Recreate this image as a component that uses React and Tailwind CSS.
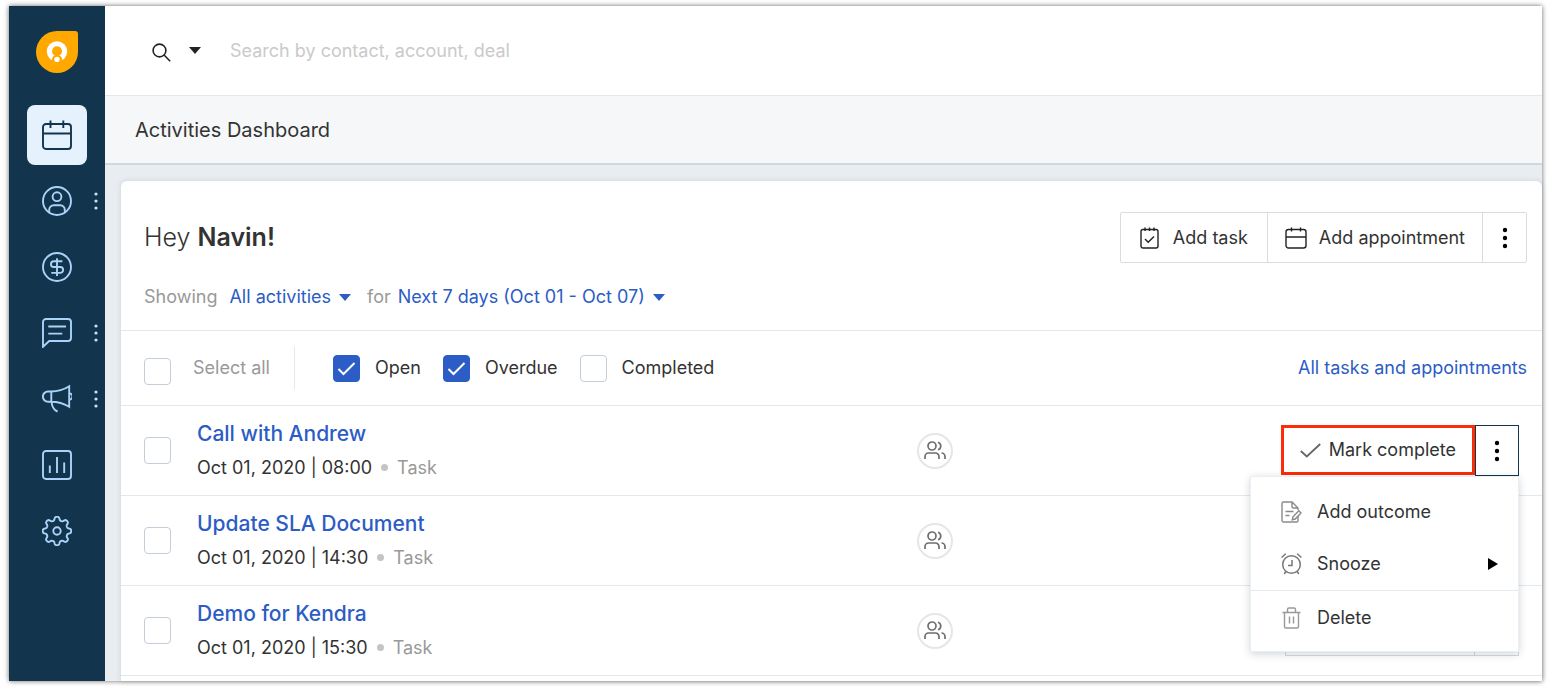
import React, { useState } from 'react';
import clsx from 'clsx';

const gearPath = (() => {
  const points = [];
  for (let i = 0; i < 160; i++) {
    const angle = (i / 160) * Math.PI * 2;
    const r = 12.5 + 1.8 * Math.tanh(1.8 * Math.cos(angle * 8));
    points.push(`${(15 + r * Math.cos(angle)).toFixed(2)} ${(15 + r * Math.sin(angle)).toFixed(2)}`);
  }
  return `M${points.join('L')}Z`;
})();

const navItems = [
  {
    id: 'activities',
    label: 'Activities',
    icon: (
      <>
        <rect x="1" y="4" width="28" height="25" rx="3" />
        <path d="M1 13.5h28M8.5 .5v7.5M21.3 .5v7.5" />
      </>
    ),
  },
  {
    id: 'contacts',
    label: 'Contacts',
    more: true,
    icon: (
      <>
        <circle cx="15" cy="15" r="14" />
        <circle cx="15" cy="10.7" r="4.4" />
        <path d="M7.2 26.5v-2.8a4.4 4.4 0 0 1 4.4-4.4h6.8a4.4 4.4 0 0 1 4.4 4.4v2.8" />
      </>
    ),
  },
  {
    id: 'deals',
    label: 'Deals',
    icon: (
      <>
        <circle cx="15" cy="15" r="14" />
        <path d="M20.4 9.3h-8.6a2.85 2.85 0 0 0 0 5.7h6.4a2.95 2.95 0 0 1 0 5.9H9.3M15 6.3v17.6" />
      </>
    ),
  },
  {
    id: 'conversations',
    label: 'Conversations',
    more: true,
    icon: <path d="M1 28.8V4a3 3 0 0 1 3-3h22a3 3 0 0 1 3 3v16a3 3 0 0 1-3 3H7.2zM6.3 8.5H24M6.3 15.6h14" />,
  },
  {
    id: 'campaigns',
    label: 'Campaigns',
    more: true,
    icon: (
      <>
        <path d="M9.3 7.5H6A5.1 5.1 0 0 0 6 17.7h3.3zM9.3 7.5C16 7.5 22 5.5 27.2 2.2v20.6C22 19.6 16 17.7 9.3 17.7" />
        <path d="M27.5 9.5a3 3 0 0 1 0 6M9.6 17.7c.2 5 1.8 8 6 10" />
      </>
    ),
  },
  {
    id: 'reports',
    label: 'Reports',
    icon: (
      <>
        <rect x="1" y="1" width="28" height="28" rx="3" />
        <path d="M7.8 15.5v7.5M15 7v16M22.2 12.5v10.5" />
      </>
    ),
  },
  {
    id: 'settings',
    label: 'Settings',
    icon: (
      <>
        <path d={gearPath} />
        <circle cx="15" cy="15" r="3.7" />
      </>
    ),
  },
];

const activities = [
  { id: 1, title: 'Call with Andrew', date: 'Oct 01, 2020 | 08:00', type: 'Task' },
  { id: 2, title: 'Update SLA Document', date: 'Oct 01, 2020 | 14:30', type: 'Task' },
  { id: 3, title: 'Demo for Kendra', date: 'Oct 01, 2020 | 15:30', type: 'Task' },
];

function Dots() {
  return (
    <svg width="6" height="22" viewBox="0 0 6 22" fill="currentColor">
      <circle cx="3" cy="3" r="2.2" />
      <circle cx="3" cy="11" r="2.2" />
      <circle cx="3" cy="19" r="2.2" />
    </svg>
  );
}

function Caret() {
  return (
    <svg width="12" height="7" viewBox="0 0 12 7" fill="currentColor">
      <path d="M0 0h12L6 7z" />
    </svg>
  );
}

function Checkbox({ label, ...props }) {
  return (
    <span className="relative block size-[27px] shrink-0">
      <input
        type="checkbox"
        aria-label={label}
        className="peer block size-full appearance-none rounded-[4px] border border-[#c3ced9] bg-white checked:border-[#2c5cc5] checked:bg-[#2c5cc5]"
        {...props}
      />
      <svg
        className="pointer-events-none absolute inset-0 hidden text-white peer-checked:block"
        viewBox="0 0 27 27"
        fill="none"
        stroke="currentColor"
        strokeWidth="2"
      >
        <path d="M5.5 14l5 5L21.5 8" />
      </svg>
    </span>
  );
}

function Logo() {
  return (
    <svg width="42" height="42" viewBox="0 0 42 42">
      <path d="M21 0h18a3 3 0 0 1 3 3v18A21 21 0 1 1 21 0z" fill="#ffa800" />
      <circle cx="21" cy="20.5" r="10.2" fill="#fff" />
      <circle cx="21" cy="20.3" r="5" fill="#ffa800" />
      <circle cx="21" cy="29" r="5.2" fill="#ffa800" />
      <circle cx="21" cy="28.4" r="2.7" fill="#fff" />
    </svg>
  );
}

function Sidebar() {
  const [active, setActive] = useState('activities');

  return (
    <aside className="w-24 shrink-0 bg-[#12344d]">
      <div className="flex justify-center pt-[25px] pb-8">
        <Logo />
      </div>
      <nav className="flex flex-col gap-[6px]">
        {navItems.map((item) => (
          <div key={item.id} className="grid grid-cols-[18px_60px_18px]">
            <button
              type="button"
              aria-label={item.label}
              onClick={() => setActive(item.id)}
              className={clsx(
                'col-start-2 flex size-[60px] items-center justify-center rounded-lg',
                active === item.id ? 'bg-[#e5f2fd] text-[#12344d]' : 'text-[#a9d3f8]'
              )}
            >
              <svg width="30" height="30" viewBox="0 0 30 30" fill="none" stroke="currentColor" strokeWidth="1.9">
                {item.icon}
              </svg>
            </button>
            {item.more && (
              <button type="button" aria-label={`${item.label} menu`} className="flex items-center justify-center text-[#c8e4fb]">
                <svg width="4" height="18" viewBox="0 0 4 18" fill="currentColor">
                  <circle cx="2" cy="2" r="1.6" />
                  <circle cx="2" cy="9" r="1.6" />
                  <circle cx="2" cy="16" r="1.6" />
                </svg>
              </button>
            )}
          </div>
        ))}
      </nav>
    </aside>
  );
}

function SearchBar() {
  return (
    <header className="flex h-[90px] items-center border-b border-[#e3e8ee] bg-white px-[47px]">
      <button type="button" aria-label="Search" className="flex items-center gap-[18px] text-[#222]">
        <svg width="19" height="22" viewBox="0 0 19 22" fill="none" stroke="currentColor" strokeWidth="1.6">
          <circle cx="7.5" cy="10.5" r="6.4" />
          <path d="M12 15l6.2 6.2" />
        </svg>
        <Caret />
      </button>
      <input
        type="search"
        aria-label="Search by contact, account, deal"
        placeholder="Search by contact, account, deal"
        className="ml-[29px] min-w-0 flex-1 text-lg outline-none placeholder:text-[#cacaca]"
      />
    </header>
  );
}

function RowMenu() {
  return (
    <div
      role="menu"
      className="absolute top-full right-0 z-10 w-[269px] border border-[#ebeff3] bg-white pt-2 pb-[7px] text-lg shadow-[0_2px_8px_rgba(18,52,77,0.2)]"
    >
      <button type="button" role="menuitem" className="flex h-[53px] w-full items-center gap-[15px] px-[30px]">
        <svg width="21" height="22" viewBox="0 0 21 22" fill="none" stroke="#8a8a8a" strokeWidth="1.4">
          <path d="M17 15v4.5a1.500 1.500 0 0 1-1.500 1.500H2.500A1.500 1.500 0 0 1 1 19.500v-17A1.500 1.500 0 0 1 2.500 1H11l6 6v2M11 1v4.500A1.500 1.500 0 0 0 12.500 7H17" />
          <path d="M4.500 10.500h8M4.500 14.500h4M17.800 9.800l2.200 2.200-5.800 6-3 .8.8-3z" />
        </svg>
        Add outcome
      </button>
      <button type="button" role="menuitem" className="flex h-[52px] w-full items-center gap-[15px] pr-5 pl-[30px]">
        <svg width="21" height="22" viewBox="0 0 21 22" fill="none" stroke="#777" strokeWidth="1.5">
          <circle cx="10.5" cy="11.5" r="8.8" />
          <path d="M11 7v5.500H7M.6 4.500L4.800 .8M16.200 .8l4.200 3.700M4.800 18.500l-1.500 2.500M16.200 18.500l1.500 2.500" />
        </svg>
        <span className="flex-1 text-left">Snooze</span>
        <svg width="10" height="12" viewBox="0 0 10 12" fill="#000">
          <path d="M0 0l10 6-10 6z" />
        </svg>
      </button>
      <button
        type="button"
        role="menuitem"
        className="flex h-[54px] w-full items-center gap-[15px] border-t border-[#e3e9ef] px-[30px]"
      >
        <svg width="21" height="22" viewBox="0 0 21 22" fill="none" stroke="#999" strokeWidth="1.4">
          <path d="M1.500 5.500h18M3.500 5.500v14A1.500 1.500 0 0 0 5 21h11a1.500 1.500 0 0 0 1.500-1.500v-14M6.500 5.500v-3A1.500 1.500 0 0 1 8 1h5a1.500 1.500 0 0 1 1.500 1.500v3M8.500 9.500v7M12.500 9.500v7" />
        </svg>
        Delete
      </button>
    </div>
  );
}

function ActivityRow({ activity, open, dimmed, onToggle }) {
  return (
    <li className="grid h-[90px] grid-cols-[9fr_7fr] items-center border-b border-[#e3e8ee] px-[23px]">
      <div className="flex items-center gap-[26px]">
        <Checkbox label={`Select ${activity.title}`} />
        <div>
          <a href="#" className="block text-[21px] leading-[34px] font-medium text-[#2c5cc5]">
            {activity.title}
          </a>
          <p className="flex items-center gap-[9px] text-lg leading-[34px]">
            {activity.date}
            <span className="size-[7px] rounded-full bg-[#c4c4c4]" />
            <span className="text-[#999]">{activity.type}</span>
          </p>
        </div>
      </div>
      <div className="flex items-center justify-between">
        <span className="flex size-9 items-center justify-center rounded-full border-2 border-[#e6e6e6]">
          <svg width="22" height="19" viewBox="0 0 22 19" fill="none" stroke="#6f6f6f" strokeWidth="1.7">
            <circle cx="8" cy="5" r="4" />
            <path d="M1 18v-2.500A3.500 3.500 0 0 1 4.500 12h7a3.500 3.500 0 0 1 3.500 3.500V18M14 1.200a4 4 0 0 1 0 7.600M17.500 12a3.500 3.500 0 0 1 3.500 3.500V18" />
          </svg>
        </span>
        <div className="relative flex h-[51px] items-start">
          <button
            type="button"
            className={clsx(
              'flex items-center gap-2 px-4 text-lg whitespace-nowrap',
              open ? 'h-[50px] border-3 border-[#fb2c08]' : 'h-full border border-[#d5d9dd]'
            )}
          >
            {/* other rows keep their label hidden while a menu is open */}
            <span className={clsx('flex items-center gap-2', dimmed && 'invisible')}>
              <svg width="21" height="15" viewBox="0 0 21 15" fill="none" stroke="#666" strokeWidth="1.8">
                <path d="M.8 8l6 5.500L20.200 1" />
              </svg>
              Mark complete
            </span>
          </button>
          <button
            type="button"
            aria-label="More actions"
            aria-expanded={open}
            onClick={onToggle}
            className={clsx(
              'flex h-full w-11 items-center justify-center border text-black',
              open ? 'border-[#12344d]' : 'border-l-0 border-[#d5d9dd]'
            )}
          >
            <Dots />
          </button>
          {open && <RowMenu />}
        </div>
      </div>
    </li>
  );
}

function App() {
  const [openRow, setOpenRow] = useState(1);

  return (
    <div className="flex min-h-screen overflow-hidden bg-white pt-[6px] pr-[7px] pb-[6px] pl-[9px] font-['Inter',sans-serif] text-[#333]">
      <div className="flex flex-1 bg-[#e9edf2] shadow-[0_0_5px_rgba(0,0,0,0.6)]">
        <Sidebar />
        <div className="flex min-w-0 flex-1 flex-col">
          <SearchBar />
          <div className="flex h-[69px] items-center border-b-2 border-[#cfd7df] bg-[#f5f7f9] px-[30px] pt-px">
            <h1 className="text-xl">Activities Dashboard</h1>
          </div>
          <main className="flex flex-1 flex-col pt-4 pl-4">
            <section className="flex-1 rounded-t-md bg-white shadow-[0_0_5px_rgba(18,52,77,0.15)]">
              <div className="border-b border-[#e3e8ee] pt-[31px] pr-[15px] pb-[19px] pl-[23px]">
                <div className="flex items-center justify-between">
                  <h2 className="text-[25px] font-light">
                    Hey <span className="font-semibold">Navin!</span>
                  </h2>
                  <div className="flex h-[51px] divide-x divide-[#dcdcdc] rounded-xs border border-[#dcdcdc] text-lg">
                    <button type="button" className="flex items-center gap-[14px] px-[19px]">
                      <svg width="19" height="22" viewBox="0 0 19 22" fill="none" stroke="#222" strokeWidth="1.4">
                        <rect x="1" y="2.5" width="17" height="18.5" rx="2" />
                        <path d="M5 .5v3.500M9.500 .5v3.500M14 .5v3.500M5 12l3.200 3.200L14 9.500" />
                      </svg>
                      Add task
                    </button>
                    <button type="button" className="flex items-center gap-3 px-[17px]">
                      <svg width="22" height="22" viewBox="0 0 22 22" fill="none" stroke="#222" strokeWidth="1.4">
                        <rect x="1" y="2.5" width="20" height="18.5" rx="2.5" />
                        <path d="M1 10h20M6.500 .5v4M15.500 .5v4" />
                      </svg>
                      Add appointment
                    </button>
                    <button type="button" aria-label="More" className="flex w-[43px] items-center justify-center text-black">
                      <Dots />
                    </button>
                  </div>
                </div>
                <div className="mt-5 flex items-center text-lg leading-7 text-[#999]">
                  <label htmlFor="activity-type">Showing</label>
                  <span className="ml-3 flex items-center gap-2 text-[#2c5cc5]">
                    <select id="activity-type" className="appearance-none field-sizing-content">
                      <option>All activities</option>
                    </select>
                    <Caret />
                  </span>
                  <label htmlFor="period" className="ml-4">for</label>
                  <span className="ml-[7px] flex items-center gap-2 text-[#2c5cc5]">
                    <select id="period" className="appearance-none field-sizing-content">
                      <option>Next 7 days (Oct 01 - Oct 07)</option>
                    </select>
                    <Caret />
                  </span>
                </div>
              </div>
              <div className="flex h-[75px] items-center border-b border-[#e3e8ee] pr-[15px] pl-[23px] text-lg">
                <label className="flex items-center gap-[22px] text-[#999]">
                  <span className="pt-[6px]">
                    <Checkbox />
                  </span>
                  Select all
                </label>
                <span className="ml-6 h-11 w-px bg-[#e3e8ed]" />
                <label className="ml-[38px] flex items-center gap-[15px]">
                  <Checkbox defaultChecked />
                  Open
                </label>
                <label className="ml-[22px] flex items-center gap-[15px]">
                  <Checkbox defaultChecked />
                  Overdue
                </label>
                <label className="ml-[22px] flex items-center gap-[15px]">
                  <Checkbox />
                  Completed
                </label>
                <a href="#" className="ml-auto text-[#2c5cc5]">All tasks and appointments</a>
              </div>
              <ul>
                {activities.map((activity) => (
                  <ActivityRow
                    key={activity.id}
                    activity={activity}
                    open={openRow === activity.id}
                    dimmed={openRow !== null && openRow !== activity.id}
                    onToggle={() => setOpenRow(openRow === activity.id ? null : activity.id)}
                  />
                ))}
              </ul>
            </section>
          </main>
        </div>
      </div>
    </div>
  );
}

export default App;
